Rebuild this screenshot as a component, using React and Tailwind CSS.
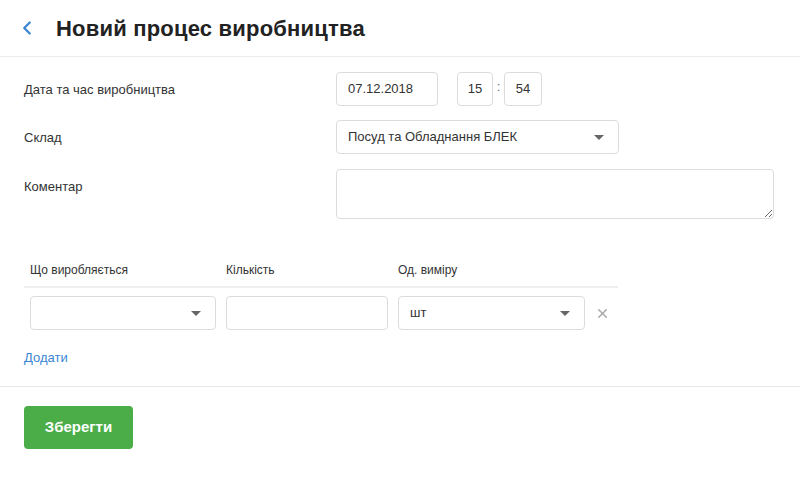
import { ChevronLeft, X } from "lucide-react";

function Caret() {
  return (
    <svg width="10" height="5" viewBox="0 0 10 5" className="text-[#666]">
      <path d="M0 0h10L5 5z" fill="currentColor" />
    </svg>
  );
}

function SelectBox({ value, className }) {
  return (
    <div
      className={
        "flex items-center justify-between border border-[#dcdcdc] rounded-[4px] bg-white pl-[11px] pr-[14px] text-[13px] text-[#333] " +
        className
      }
    >
      <span>{value}</span>
      <Caret />
    </div>
  );
}

export default function App() {
  return (
    <div
      className="w-[800px] h-[478px] bg-white text-[#333] overflow-hidden"
      style={{ fontFamily: '"Liberation Sans", Arial, sans-serif' }}
    >
      {/* Header */}
      <div className="h-[57px] flex items-center pl-[16px] border-b border-[#ececec]">
        <ChevronLeft className="w-[22px] h-[22px] text-[#3a86d4]" strokeWidth={2.5} />
        <h1 className="ml-[18px] text-[22px] font-bold text-[#222] tracking-[0.2px]">
          Новий процес виробництва
        </h1>
      </div>

      {/* Form */}
      <div className="pl-[24px] pt-[15px]">
        <div className="flex items-start h-[48px]">
          <div className="w-[312px] pt-[8px] text-[13px]">Дата та час виробництва</div>
          <div className="flex items-center">
            <div className="w-[102px] h-[34px] border border-[#dcdcdc] rounded-[4px] flex items-center pl-[11px] text-[13px]">
              07.12.2018
            </div>
            <div className="ml-[19px] w-[36px] h-[34px] border border-[#dcdcdc] rounded-[4px] flex items-center justify-center text-[13px]">
              15
            </div>
            <div className="w-[11px] text-center text-[13px] text-[#666] -mt-[4px]">:</div>
            <div className="w-[38px] h-[34px] border border-[#dcdcdc] rounded-[4px] flex items-center justify-center text-[13px]">
              54
            </div>
          </div>
        </div>

        <div className="flex items-start h-[49px]">
          <div className="w-[312px] pt-[8px] text-[13px]">Склад</div>
          <SelectBox value="Посуд та Обладнання БЛЕК" className="w-[283px] h-[34px]" />
        </div>

        <div className="flex items-start h-[70px]">
          <div className="w-[312px] pt-[8px] text-[13px]">Коментар</div>
          <textarea className="w-[438px] h-[50px] border border-[#dcdcdc] rounded-[4px] outline-none" />
        </div>

        {/* Products table */}
        <div className="w-[594px] mt-[14px]">
          <div className="flex h-[35px] items-center border-b-2 border-[#efefef] text-[12px] text-[#333] pl-[6px]">
            <div className="w-[196px]">Що виробляється</div>
            <div className="w-[172px]">Кількість</div>
            <div>Од. виміру</div>
          </div>
          <div className="flex items-center pl-[6px] pt-[8px]">
            <SelectBox value="" className="w-[186px] h-[34px]" />
            <div className="ml-[10px] w-[162px] h-[34px] border border-[#dcdcdc] rounded-[4px]" />
            <SelectBox value="шт" className="ml-[10px] w-[187px] h-[34px]" />
            <X className="ml-[10px] w-[15px] h-[15px] text-[#aaa]" strokeWidth={2.5} />
          </div>
        </div>

        <div className="mt-[18px] text-[13px] text-[#3a86d4]">Додати</div>
      </div>

      <div className="mt-[18px] border-t border-[#e6e6e6]" />

      <div className="pl-[24px] pt-[19px]">
        <button className="w-[109px] h-[43px] rounded-[4px] bg-[#4aad48] text-white text-[15px] font-bold">
          Зберегти
        </button>
      </div>
    </div>
  );
}
